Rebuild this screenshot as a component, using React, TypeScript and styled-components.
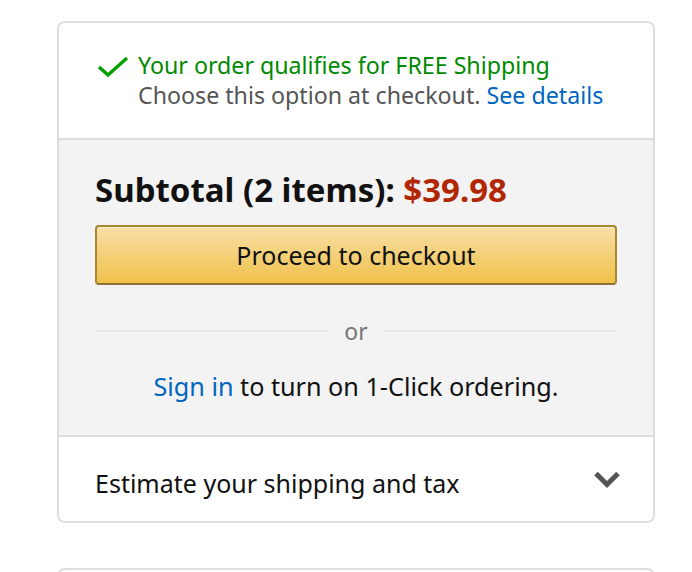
import React from 'react';
import styled, { createGlobalStyle } from 'styled-components';

const GlobalStyle = createGlobalStyle`
  body {
    margin: 0;
    background: #fff;
    font-family: "Noto Sans", "Liberation Sans", sans-serif;
    color: #111;
  }
`;

const Page = styled.div`
  padding: 21px 37px 0 57px;
  display: flex;
  flex-direction: column;
  gap: 45px;
`;

const Card = styled.div<{ $minHeight?: number }>`
  border: 2px solid #dddddd;
  border-radius: 8px;
  overflow: hidden;
  background: #fff;
  min-height: ${p => p.$minHeight || 0}px;
`;

const Section = styled.div<{ $gray?: boolean }>`
  background: ${p => (p.$gray ? '#f3f3f3' : '#fff')};
  & + & {
    border-top: 2px solid #dddddd;
  }
`;

const ShippingBox = styled.div`
  display: flex;
  align-items: flex-start;
  gap: 9px;
  padding: 27px 36px 28px 38px;
`;

const Check = styled.svg`
  flex: none;
  margin-top: 6px;
`;

const ShipText = styled.div`
  font-size: 23.2px;
  line-height: 30px;
`;

const Green = styled.div`
  color: #008a00;
`;

const Muted = styled.div`
  color: #555;
`;

const Link = styled.a`
  color: #0066c0;
  text-decoration: none;
`;

const Summary = styled.div`
  padding: 30px 36px 34px;
  display: flex;
  flex-direction: column;
`;

const Subtotal = styled.div`
  font-size: 33px;
  font-weight: 700;
  line-height: 40px;
  margin-bottom: 15px;
`;

const Price = styled.span`
  color: #b12704;
`;

const CheckoutButton = styled.button`
  height: 60px;
  border: 2px solid #a88734;
  border-bottom-color: #8c7130;
  border-radius: 4px;
  background: linear-gradient(to bottom, #f7dfa5, #f0c14b);
  box-shadow: inset 0 1px 0 rgba(255, 255, 255, 0.5);
  font-family: inherit;
  font-size: 25px;
  color: #111;
  cursor: pointer;
`;

const Divider = styled.div`
  display: flex;
  align-items: center;
  gap: 17px;
  margin-top: 33px;
  color: #767676;
  font-size: 23px;
  line-height: 26px;
  &::before,
  &::after {
    content: '';
    flex: 1;
    height: 2px;
    background: #e7e7e7;
  }
`;

const SignIn = styled.div`
  text-align: center;
  font-size: 25.2px;
  line-height: 30px;
  margin-top: 27px;
`;

const EstimateRow = styled.div`
  display: flex;
  align-items: flex-start;
  justify-content: space-between;
  padding: 32px 31px 24px 36px;
  height: 84px;
  box-sizing: border-box;
  font-size: 25px;
  line-height: 28px;
`;

export default function App() {
  return (
    <>
      <GlobalStyle />
      <Page>
        <Card>
          <Section>
            <ShippingBox>
              <Check width="32" height="22" viewBox="0 0 32 22">
                <path d="M2 11 L11 19 L30 2" fill="none" stroke="#00a000" strokeWidth="3.4" />
              </Check>
              <ShipText>
                <Green>Your order qualifies for FREE Shipping</Green>
                <Muted>
                  Choose this option at checkout. <Link href="#">See details</Link>
                </Muted>
              </ShipText>
            </ShippingBox>
          </Section>
          <Section $gray>
            <Summary>
              <Subtotal>
                Subtotal (2 items): <Price>$39.98</Price>
              </Subtotal>
              <CheckoutButton>Proceed to checkout</CheckoutButton>
              <Divider>or</Divider>
              <SignIn>
                <Link href="#">Sign in</Link> to turn on 1-Click ordering.
              </SignIn>
            </Summary>
          </Section>
          <Section>
            <EstimateRow>
              <span>Estimate your shipping and tax</span>
              <svg width="30" height="22" viewBox="0 0 30 22">
                <path d="M4 4.5 L15 15.5 L26 4.5" fill="none" stroke="#555" strokeWidth="5" />
              </svg>
            </EstimateRow>
          </Section>
        </Card>
        <Card $minHeight={60} />
      </Page>
    </>
  );
}
